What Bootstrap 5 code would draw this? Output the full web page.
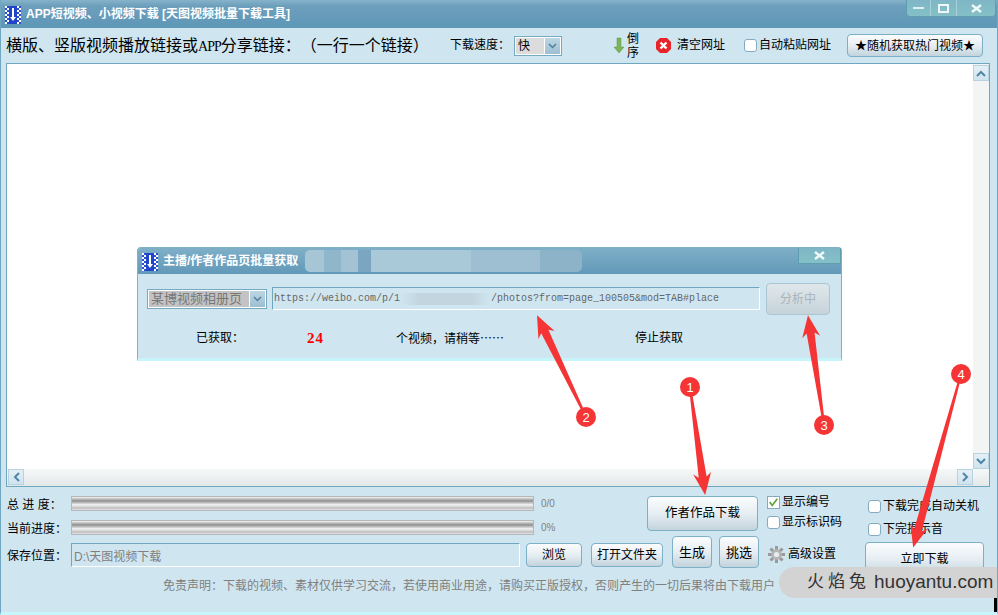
<!DOCTYPE html>
<html lang="zh-CN">
<head>
    <meta charset="UTF-8">
    <meta name="viewport" content="width=device-width, initial-scale=1.0">
    <title>APP短视频、小视频下载</title>
    <link href="https://cdn.jsdelivr.net/npm/bootstrap@5.3.0/dist/css/bootstrap.min.css" rel="stylesheet">
    <style>
        body {
            margin: 0;
            width: 998px;
            height: 615px;
            overflow: hidden;
            background: #fff;
            color: #000;
            font-family: "Liberation Sans", "Noto Sans CJK SC", sans-serif;
            font-size: 12px;
            line-height: 1.2;
            text-spacing-trim: space-all;
        }
        .app-win {
            position: relative;
            width: 998px;
            height: 615px;
            background: #cfe6f1;
            border-left: 1px solid #6fa6c0;
            border-right: 1px solid #6fa6c0;
            border-bottom: 3px solid #c6f5fb;
            overflow: hidden;
        }
        .title-bar {
            height: 28px;
            background: linear-gradient(#86b3cb 0, #6d9fbc 6px, #6299b8 22px, #5f97b6 100%);
            color: #fff;
            font-weight: bold;
            font-size: 12px;
            padding-left: 4px;
        }
        .app-icon { margin-right: 5px; margin-top: 1px; }
        .win-btns {
            height: 17px;
            margin-left: auto;
            margin-right: 1px;
            align-self: flex-start;
            border: 1px solid #5f9db0;
            border-top: 0;
            border-radius: 0 0 4px 4px;
            background: linear-gradient(#7fb6c6, #84c0c6);
        }
        .win-btns span {
            display: flex;
            align-items: center;
            justify-content: center;
            height: 100%;
            border-right: 1px solid #a5d2da;
        }
        .win-btns span:last-child { border-right: 0; }
        .w-min { width: 24px; }
        .w-max { width: 26px; }
        .w-close { width: 38px; }
        .tool-row { height: 35px; padding-left: 5px; }
        .tool-title { font-size: 16px; width: 444px; white-space: nowrap; }
        .app-word { font-family: "Liberation Serif", serif; font-size: 14px; letter-spacing: -1px; }
        .speed-label { font-size: 12px; width: 64px; white-space: nowrap; }
        .fake-select {
            background: #fff;
            border: 1px solid #76a9c2;
            height: 20px;
            padding: 1px;
        }
        .fake-select .sel-text { background: #dcdcdc; padding-left: 2px; line-height: 16px; }
        .fake-select .sel-arrow {
            width: 15px;
            margin-left: auto;
            background: linear-gradient(#bcd6e3, #9dbfd2);
            display: flex;
            align-items: center;
            justify-content: center;
        }
        .speed-sel { width: 48px; }
        .speed-sel .sel-text { width: 28px; }
        .order-arrow { margin-left: 52px; }
        .order-txt { width: 12px; line-height: 14px; font-size: 12px; margin-left: 3px; }
        .clear-icon { margin-left: 17px; }
        .clear-txt { margin-left: 6px; }
        .tick-box {
            width: 13px;
            height: 13px;
            margin: 0 2px 0 0;
            border: 1px solid #86abc0;
            border-radius: 0;
            background: #fff;
            flex: none;
            float: none;
        }
        .paste-box { margin-left: 19px; }
        .ui-btn {
            padding: 0;
            font-size: 12px;
            color: #000;
            border: 1px solid #7cb0c6;
            border-radius: 4px;
            background: linear-gradient(#fbfcfd 0, #e6eef3 50%, #c3d3dc 100%);
            line-height: 1;
        }
        .ui-btn:disabled {
            color: #a9b4ba;
            opacity: 1;
            border-color: #a9c6d4;
            background: linear-gradient(#dfe7eb, #c6d3da);
        }
        .rand-btn { width: 136px; height: 23px; margin-left: 16px; }
        .list-panel {
            height: 424px;
            margin: 0 7px 0 5px;
            border: 1px solid #6fa6c0;
            background: #fff;
        }
        .v-bar { width: 16px; padding-top: 1px; background: #f3f5f5; }
        .h-bar { height: 17px; background: linear-gradient(#f6f8f8, #e3e8e9); padding-left: 1px; padding-right: 16px; }
        .sb-btn {
            width: 16px;
            height: 16px;
            display: flex;
            align-items: center;
            justify-content: center;
            background: linear-gradient(#e4f0f6, #cfe3ee);
            border: 1px solid #b8d3e0;
        }
        .bottom-wrap { padding: 9px 0 0 6px; }
        .bottom-a { height: 40px; }
        .bottom-b { height: 38px; }
        .progress-col { width: 640px; }
        .prog-row { height: 15px; margin-bottom: 9px; }
        .prog-label { width: 64px; font-size: 12px; white-space: nowrap; padding-top: 3px; }
        .save-label { padding-top: 6px; }
        .prog-track {
            width: 463px;
            height: 15px;
            border: 1px solid #b4b8ba;
            border-radius: 0;
            background: linear-gradient(#f3f3f3 0, #8f8f8f 30%, #f4f4f4 60%, #bdbdbd 85%, #e6e6e6 100%);
        }
        .prog-val { color: #808080; font-size: 10px; margin-left: 7px; }
        .author-btn { width: 111px; height: 35px; font-size: 12.5px; }
        .check-col { width: 101px; margin-left: 9px; }
        .check-line { height: 13px; margin-bottom: 7px; white-space: nowrap; }
        .check-col2 { margin-top: 4px; margin-left: 0; }
        .check-col2 .check-line { margin-bottom: 10px; }
        .save-row { width: 664px; padding-top: 7px; }
        .save-input {
            width: 449px;
            height: 24px;
            padding: 0 2px;
            background: #cfe6f1;
            border: 1px solid #6fa6c0;
            border-right-color: #fff;
            border-bottom-color: #fff;
            border-radius: 0;
            color: #808080;
            font-size: 12px;
            box-shadow: none;
        }
        .browse-btn { width: 56px; height: 24px; margin-left: 6px; }
        .open-btn { width: 72px; height: 24px; margin-left: 9px; }
        .small-btn { width: 40px; height: 32px; font-size: 13px; }
        .gen-btn { margin-left: 1px; margin-right: 7px; }
        .adv-box { width: 97px; margin-left: 9px; padding-top: 8px; height: 28px; gap: 3px; }
        .now-btn { width: 119px; height: 34px; margin-top: 6px; }
        .notice {
            color: #808080;
            padding-left: 156px;
            margin-top: 5px;
            white-space: nowrap;
            font-size: 12px;
        }
        /* small dialog, sits over the list like a window */
        .sub-win {
            position: absolute;
            left: 136px;
            top: 247px;
            width: 705px;
            height: 114px;
            background: #cfe6f1;
            border: 1px solid #7fb0c6;
            border-bottom: 3px solid #c6f5fb;
            border-radius: 4px 4px 0 0;
        }
        .sub-title {
            height: 26px;
            background: linear-gradient(#7fafc8, #6299b8);
            color: #fff;
            font-weight: bold;
            padding-left: 4px;
            border-radius: 3px 3px 0 0;
        }
        .blur-strip {
            width: 277px;
            height: 22px;
            margin-left: 7px;
            border-radius: 5px;
            background: linear-gradient(90deg, #a6c6d6 0 7%, #8fb6cb 7% 13%, #a3c3d4 13% 19%, #7aa6c1 19% 24%, #a9c8d8 24% 60%, #9dbfd1 60% 85%, #8db3c8 85% 100%);
        }
        .sub-close {
            width: 43px;
            height: 16px;
            margin-left: auto;
            align-self: flex-start;
            display: flex;
            align-items: center;
            justify-content: center;
            background: linear-gradient(#7fb6c6, #84c0c6);
            border: 1px solid #5f9db0;
            border-top: 0;
        }
        .sub-form { padding: 9px 0 0 9px; height: 50px; }
        .type-sel { width: 120px; margin-top: 6px; }
        .type-sel .sel-text { width: 100px; color: #777; background: #c3c3c3; font-size: 13px; white-space: nowrap; }
        .url-box {
            width: 488px;
            height: 23px;
            margin: 4px 6px 0 5px;
            padding-left: 1px;
            border: 1px solid #6fa6c0;
            border-right-color: #fff;
            border-bottom-color: #fff;
            color: #666;
            font-family: "Liberation Mono", monospace;
            font-size: 10px;
            white-space: nowrap;
        }
        .url-blur {
            display: inline-block;
            width: 91px;
            height: 12px;
            background: linear-gradient(90deg, #cfe6f1, #c3d6df 20% 80%, #cfe6f1);
        }
        .analyze-btn { width: 64px; height: 32px; }
        .sub-status { height: 28px; }
        .st-a { width: 58px; margin-left: 58px; }
        .st-n {
            width: 37px;
            padding-left: 53px;
            box-sizing: content-box;
            color: #f00;
            font-family: "Liberation Serif", serif;
            font-weight: bold;
            font-size: 15px;
            letter-spacing: 1px;
        }
        .st-b {
            width: 239px;
            margin-left: 52px;
            white-space: nowrap;
            font-family: "Noto Sans CJK SC", sans-serif;
        }
        .overlay-marks { position: absolute; left: 0; top: 0; pointer-events: none; }
        .wm-pill {
            position: absolute;
            left: 778px;
            top: 567px;
            width: 220px;
            height: 31px;
            background: #d3d3d3;
            border-radius: 16px 0 0 16px;
            color: #333;
            font-size: 19px;
            padding-left: 28px;
            white-space: nowrap;
        }
        .wm-pill b { font-weight: normal; font-size: 17px; letter-spacing: 4px; margin-right: 4px; }
        .wm-block { position: absolute; left: 993px; top: 598px; width: 5px; height: 17px; background: #000; }
    </style>
</head>
<body>

<div class="app-win">
    <div class="title-bar d-flex align-items-center">
        <svg class="app-icon" width="16" height="18" viewBox="0 0 16 18">
            <defs>
                <pattern id="chk" width="4" height="4" patternUnits="userSpaceOnUse">
                    <rect width="4" height="4" fill="#2b4fd0"/>
                    <rect width="2" height="2" fill="#fff"/>
                    <rect x="2" y="2" width="2" height="2" fill="#fff"/>
                </pattern>
            </defs>
            <rect width="16" height="18" fill="url(#chk)"/>
            <rect x="4" width="8" height="18" fill="#1f45c8"/>
            <path d="M7 2h2v9h2l-3 4-3-4h2z" fill="#fff"/>
        </svg>
        <span>APP短视频、小视频下载 [天图视频批量下载工具]</span>
        <div class="win-btns d-flex">
            <span class="w-min"><svg width="11" height="4"><rect y="1" width="11" height="2" fill="#dff0f2"/></svg></span>
            <span class="w-max"><svg width="11" height="9"><rect x="1" y="1" width="9" height="7" fill="none" stroke="#eef8f9" stroke-width="2"/></svg></span>
            <span class="w-close"><svg width="11" height="9"><path d="M1 1l9 7M10 1l-9 7" stroke="#eef8f9" stroke-width="2.4"/></svg></span>
        </div>
    </div>

    <div class="tool-row d-flex align-items-center">
        <div class="tool-title">横版、竖版视频播放链接或<span class="app-word">APP</span>分享链接：（一行一个链接）</div>
        <div class="speed-label">下载速度：</div>
        <div class="fake-select speed-sel d-flex">
            <span class="sel-text">快</span>
            <span class="sel-arrow"><svg width="9" height="6"><path d="M1 1l3.500 3.500L8 1" fill="none" stroke="#4f7f9c" stroke-width="1.500"/></svg></span>
        </div>
        <svg class="order-arrow" width="10" height="17" viewBox="0 0 10 17"><path d="M3 1h4v9h3l-5 6-5-6h3z" fill="#7cb45a" stroke="#5a9440" stroke-width=".5"/></svg>
        <div class="order-txt">倒序</div>
        <svg class="clear-icon" width="15" height="15" viewBox="0 0 15 15"><path d="M4 0h7l4 4v7l-4 4H4l-4-4V4z" fill="#e8232a"/><path d="M4.500 4.500l6 6M10.500 4.500l-6 6" stroke="#fff" stroke-width="2.400"/></svg>
        <span class="clear-txt">清空网址</span>
        <input class="form-check-input tick-box paste-box" type="checkbox">
        <span>自动粘贴网址</span>
        <button class="btn ui-btn rand-btn" type="button">★随机获取热门视频★</button>
    </div>

    <div class="list-panel d-flex flex-column">
        <div class="d-flex flex-grow-1">
            <div class="flex-grow-1"></div>
            <div class="v-bar d-flex flex-column justify-content-between">
                <div class="sb-btn"><svg width="10" height="7"><path d="M1 6l4-4 4 4" fill="none" stroke="#4f86a8" stroke-width="2"/></svg></div>
                <div class="sb-btn"><svg width="10" height="7"><path d="M1 1l4 4 4-4" fill="none" stroke="#4f86a8" stroke-width="2"/></svg></div>
            </div>
        </div>
        <div class="h-bar d-flex justify-content-between">
            <div class="sb-btn"><svg width="7" height="10"><path d="M6 1L2 5l4 4" fill="none" stroke="#4f86a8" stroke-width="2"/></svg></div>
            <div class="sb-btn"><svg width="7" height="10"><path d="M1 1l4 4-4 4" fill="none" stroke="#4f86a8" stroke-width="2"/></svg></div>
        </div>
    </div>

    <div class="bottom-wrap">
        <div class="bottom-a d-flex">
            <div class="progress-col">
                <div class="prog-row d-flex align-items-center">
                    <div class="prog-label">总 进 度：</div>
                    <div class="progress prog-track"></div>
                    <span class="prog-val">0/0</span>
                </div>
                <div class="prog-row d-flex align-items-center">
                    <div class="prog-label">当前进度：</div>
                    <div class="progress prog-track"></div>
                    <span class="prog-val">0%</span>
                </div>
            </div>
            <button class="btn ui-btn author-btn" type="button">作者作品下载</button>
            <div class="check-col">
                <div class="check-line d-flex align-items-center">
                    <svg class="tick-box" width="13" height="13" viewBox="0 0 13 13"><path d="M2 6l3 4 6-8" fill="none" stroke="#5fa33c" stroke-width="2"/></svg>
                    <span>显示编号</span>
                </div>
                <div class="check-line d-flex align-items-center">
                    <input class="form-check-input tick-box" type="checkbox">
                    <span>显示标识码</span>
                </div>
            </div>
            <div class="check-col2">
                <div class="check-line d-flex align-items-center">
                    <input class="form-check-input tick-box" type="checkbox">
                    <span>下载完成自动关机</span>
                </div>
                <div class="check-line d-flex align-items-center">
                    <input class="form-check-input tick-box" type="checkbox">
                    <span>下完提示音</span>
                </div>
            </div>
        </div>
        <div class="bottom-b d-flex">
            <div class="save-row d-flex align-items-start">
                <div class="prog-label save-label">保存位置：</div>
                <input class="form-control save-input" type="text" value="D:\天图视频下载">
                <button class="btn ui-btn browse-btn" type="button">浏览</button>
                <button class="btn ui-btn open-btn" type="button">打开文件夹</button>
            </div>
            <button class="btn ui-btn small-btn gen-btn" type="button">生成</button>
            <button class="btn ui-btn small-btn" type="button">挑选</button>
            <div class="adv-box d-flex align-items-center">
                <svg width="17" height="17" viewBox="0 0 17 17">
                    <g fill="#9a9a9a">
                        <rect x="7" y="0" width="3" height="17"/>
                        <rect x="7" y="0" width="3" height="17" transform="rotate(45 8.500 8.500)"/>
                        <rect x="7" y="0" width="3" height="17" transform="rotate(90 8.500 8.500)"/>
                        <rect x="7" y="0" width="3" height="17" transform="rotate(135 8.500 8.500)"/>
                    </g>
                    <circle cx="8.500" cy="8.500" r="5.200" fill="#b5b5b5"/>
                    <circle cx="8.500" cy="8.500" r="2.600" fill="#e8eef0"/>
                </svg>
                <span>高级设置</span>
            </div>
            <button class="btn ui-btn now-btn" type="button">立即下载</button>
        </div>
        <div class="notice">免责声明：下载的视频、素材仅供学习交流，若使用商业用途，请购买正版授权，否则产生的一切后果将由下载用户</div>
    </div>

    <div class="sub-win">
        <div class="sub-title d-flex align-items-center">
            <svg class="app-icon" width="16" height="18" viewBox="0 0 16 18">
                <rect width="16" height="18" fill="url(#chk)"/>
                <rect x="4" width="8" height="18" fill="#1f45c8"/>
                <path d="M7 2h2v9h2l-3 4-3-4h2z" fill="#fff"/>
            </svg>
            <span>主播/作者作品页批量获取</span>
            <div class="blur-strip"></div>
            <div class="sub-close"><svg width="11" height="9"><path d="M1 1l9 7M10 1l-9 7" stroke="#eef8f9" stroke-width="2.400"/></svg></div>
        </div>
        <div class="sub-form d-flex align-items-start">
            <div class="fake-select type-sel d-flex">
                <span class="sel-text">某博视频相册页</span>
                <span class="sel-arrow"><svg width="9" height="6"><path d="M1 1l3.500 3.500L8 1" fill="none" stroke="#4f7f9c" stroke-width="1.500"/></svg></span>
            </div>
            <div class="url-box d-flex align-items-center">https://weibo.com/p/1<span class="url-blur"></span>/photos?from=page_100505&amp;mod=TAB#place</div>
            <button class="btn ui-btn analyze-btn" type="button" disabled>分析中</button>
        </div>
        <div class="sub-status d-flex align-items-center">
            <div class="st-a">已获取：</div>
            <div class="st-n">24</div>
            <div class="st-b">个视频，请稍等……</div>
            <div>停止获取</div>
        </div>
    </div>

    <div class="wm-pill d-flex align-items-center"><b>火焰兔</b>huoyantu.com</div>
    <div class="wm-block"></div>

    <svg class="overlay-marks" width="998" height="615" viewBox="0 0 998 615">
        <g fill="#f53535">
            <g transform="translate(689 387) rotate(82)"><path d="M0-1L91-4L87-9L109 0L87 9L91 4L0 1z"/></g>
            <g transform="translate(585 417) rotate(-115.700)"><path d="M0-1L95-4L91-9L113 0L91 9L95 4L0 1z"/></g>
            <g transform="translate(823 425) rotate(-98.300)"><path d="M0-1L93-4L89-9L111 0L89 9L93 4L0 1z"/></g>
            <g transform="translate(960 374) rotate(105.400)"><path d="M0-1L162-4L158-9L180 0L158 9L162 4L0 1z"/></g>
            <circle cx="689" cy="387" r="10"/>
            <circle cx="585" cy="417" r="10"/>
            <circle cx="823" cy="425" r="10"/>
            <circle cx="960" cy="374" r="10"/>
        </g>
        <g fill="#fff" font-family="Liberation Sans, sans-serif" font-size="13" text-anchor="middle">
            <text x="689" y="392">1</text>
            <text x="585" y="422">2</text>
            <text x="823" y="430">3</text>
            <text x="960" y="379">4</text>
        </g>
    </svg>
</div>

<script src="https://cdn.jsdelivr.net/npm/bootstrap@5.3.0/dist/js/bootstrap.bundle.min.js"></script>
</body>
</html>
